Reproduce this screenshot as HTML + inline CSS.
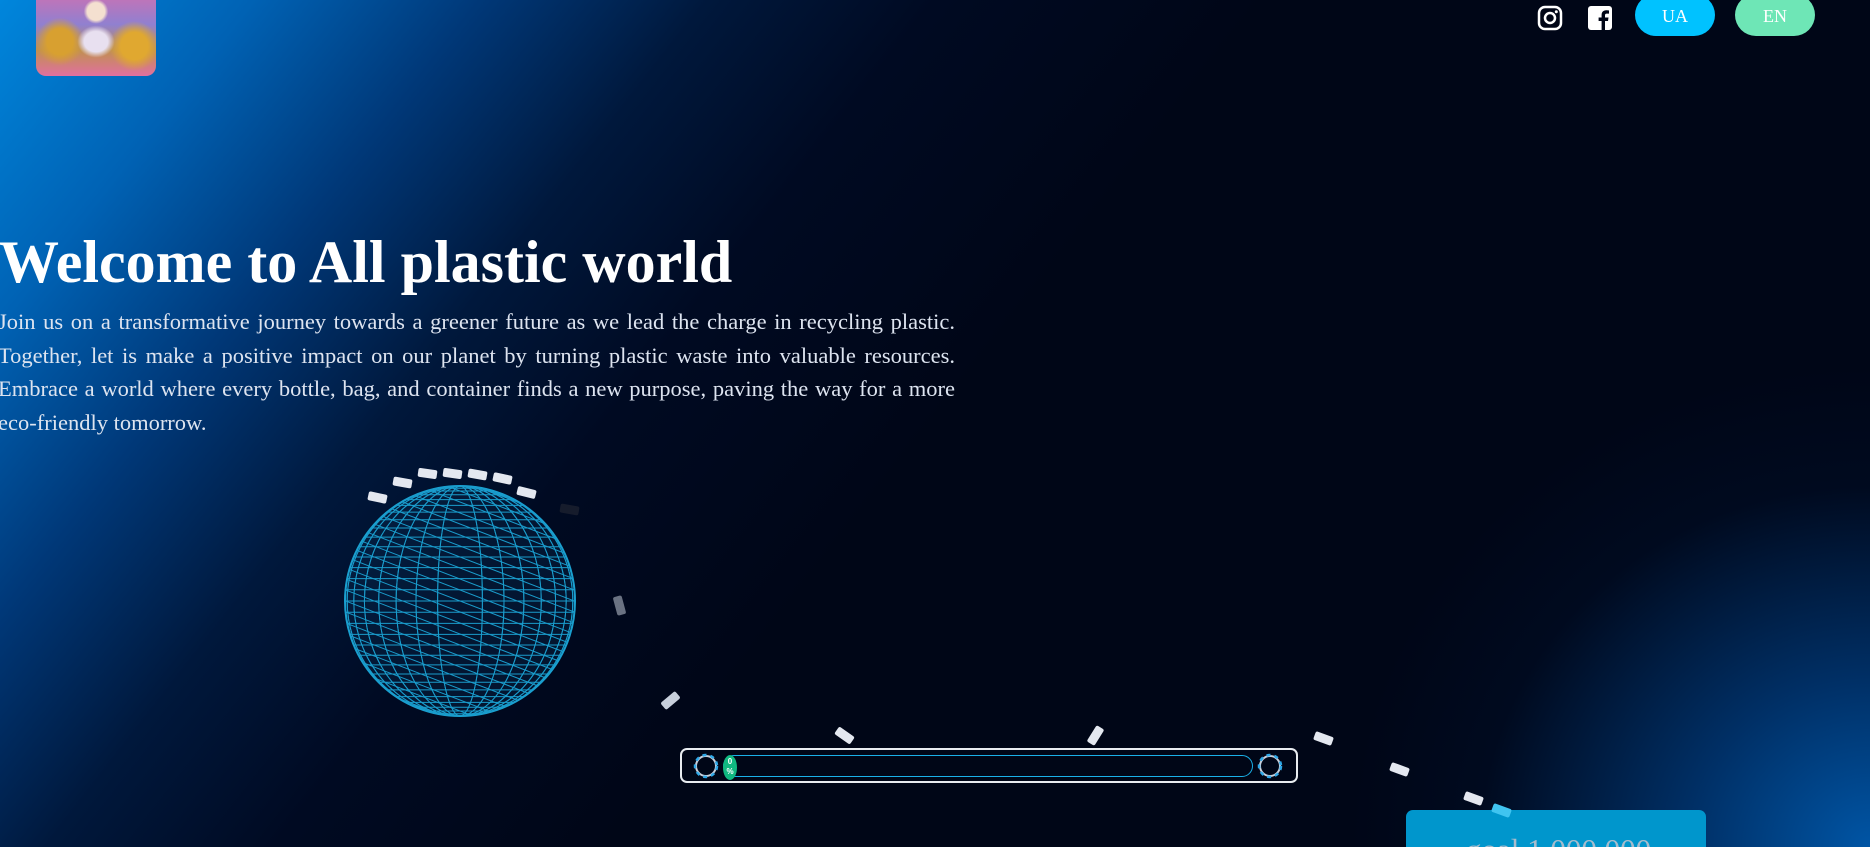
<!DOCTYPE html>
<html><head><meta charset="utf-8"><style>
html,body{margin:0;padding:0;width:1870px;height:847px;overflow:hidden;background:#000617;font-family:"Liberation Serif",serif}
#w{position:relative;width:1870px;height:847px;overflow:hidden}
.bg{position:absolute;left:0;top:0;width:1870px;height:847px;background:
radial-gradient(ellipse 520px 480px at 1870px 847px,rgba(0,85,165,1) 0%,rgba(0,65,135,.7) 35%,rgba(0,20,50,.3) 75%,rgba(0,6,23,0) 100%),
linear-gradient(128deg,#0086dc 0%,#0062b4 10%,#003878 19%,#00183c 28%,#000a22 37%,#000617 50%,#000617 100%);}
.logo{position:absolute;left:36px;top:-10px;width:120px;height:86px;border-radius:10px;background:
radial-gradient(circle at 50% 25%,#f4e0d0 0 10%,transparent 14%),
radial-gradient(ellipse at 50% 60%,#e8e0f0 0 14%,transparent 22%),
radial-gradient(circle at 20% 60%,#d8a030 0 12%,transparent 22%),
radial-gradient(circle at 82% 65%,#e0a830 0 12%,transparent 22%),
linear-gradient(180deg,#d070b0,#9080d0 40%,#c09050 70%,#e070a0);}
.ico{position:absolute;top:5px}
.btn{position:absolute;top:-6px;width:80px;height:42px;border-radius:21px;color:#fff;font-size:18px;text-align:center;line-height:44px}
h1{position:absolute;left:-1px;top:232px;margin:0;font-size:60px;line-height:60px;font-weight:bold;color:#fff;white-space:nowrap}
p{position:absolute;left:-2px;top:305px;width:957px;margin:0;font-size:22.5px;line-height:33.6px;color:#dde4f0;text-align:justify}
.d{position:absolute;width:19px;height:9px;border-radius:2px;background:#e4e8f0}
.goal{position:absolute;left:1406px;top:810px;width:300px;height:37px;overflow:hidden;border-radius:7px 7px 0 0;background:#0096cc;color:#a8bccc;font-size:31px;padding-left:60px;box-sizing:border-box;line-height:80px;white-space:nowrap}
</style></head><body><div id="w">
<div class="bg"></div>
<div class="logo"></div>
<svg class="ico" style="left:1537px" width="26" height="26" viewBox="0 0 26 26"><rect x="2" y="2" width="22" height="22" rx="6" fill="none" stroke="#fff" stroke-width="2.5"/><circle cx="13" cy="13" r="5" fill="none" stroke="#fff" stroke-width="2.5"/><circle cx="19.3" cy="6.7" r="1.5" fill="#fff"/></svg>
<svg class="ico" style="left:1588px" width="24" height="26" viewBox="0 0 24 26"><rect x="0" y="1" width="24" height="24" rx="3" fill="#fff"/><path d="M17 25V16h3l.5-3.5H17v-2.2c0-1 .4-1.7 1.8-1.7H21V5.5c-.5-.1-1.6-.2-2.8-.2-2.8 0-4.6 1.7-4.6 4.7v2.5h-3V16h3v9z" fill="#000617"/></svg>
<div class="btn" style="left:1635px;background:#00c2ff">UA</div>
<div class="btn" style="left:1735px;background:#6ee6b6">EN</div>
<h1>Welcome to All plastic world</h1>
<p>Join us on a transformative journey towards a greener future as we lead the charge in recycling plastic. Together, let is make a positive impact on our planet by turning plastic waste into valuable resources. Embrace a world where every bottle, bag, and container finds a new purpose, paving the way for a more eco-friendly tomorrow.</p>
<svg id="g" style="position:absolute;left:340px;top:481px" width="240" height="240" viewBox="-120 -120 240 240"></svg>
<div class="d" style="left:368px;top:493px;transform:rotate(12deg)"></div>
<div class="d" style="left:393px;top:478px;transform:rotate(10deg)"></div>
<div class="d" style="left:418px;top:469px;transform:rotate(8deg)"></div>
<div class="d" style="left:443px;top:469px;transform:rotate(8deg)"></div>
<div class="d" style="left:468px;top:470px;transform:rotate(10deg)"></div>
<div class="d" style="left:493px;top:474px;transform:rotate(12deg)"></div>
<div class="d" style="left:517px;top:488px;transform:rotate(14deg)"></div>
<div class="d" style="left:560px;top:505px;transform:rotate(10deg);background:#161c2c"></div>
<div class="d" style="left:610px;top:601px;transform:rotate(75deg);background:#6a7282"></div>
<div class="d" style="left:661px;top:696px;transform:rotate(-40deg);background:#c8d0dc"></div>
<div class="d" style="left:835px;top:731px;transform:rotate(35deg)"></div>
<div class="d" style="left:1086px;top:731px;transform:rotate(-58deg)"></div>
<div class="d" style="left:1314px;top:734px;transform:rotate(20deg)"></div>
<div class="d" style="left:1390px;top:765px;transform:rotate(20deg)"></div>
<div class="d" style="left:1464px;top:794px;transform:rotate(20deg)"></div>
<div class="goal">goal 1 000 000</div>
<div class="d" style="left:1492px;top:806px;transform:rotate(20deg);background:#40c4f0"></div>
<div style="position:absolute;left:680px;top:748px;width:614px;height:31px;border:2px solid #e8ecf0;border-radius:7px"></div>
<div style="position:absolute;left:723px;top:755px;width:528px;height:20px;border:1.5px solid #1ab0e8;border-radius:11px"></div>
<div style="position:absolute;left:723px;top:755px;width:14px;height:25px;border-radius:50%;background:#10b880;color:#fff;font:bold 8px 'Liberation Sans',sans-serif;text-align:center;line-height:10px;padding-top:2px;box-sizing:border-box">0<br>%</div>
<svg style="position:absolute;left:693px;top:753px" width="26" height="26"><circle cx="13" cy="13" r="10" fill="none" stroke="#c8d0dc" stroke-width="2"/><circle cx="13" cy="13" r="11" fill="none" stroke="#2ea8e8" stroke-width="2.5" stroke-dasharray="4 4"/></svg>
<svg style="position:absolute;left:1257px;top:753px" width="26" height="26"><circle cx="13" cy="13" r="10" fill="none" stroke="#c8d0dc" stroke-width="2"/><circle cx="13" cy="13" r="11" fill="none" stroke="#2ea8e8" stroke-width="2.5" stroke-dasharray="4 4"/></svg>
</div>
<script>
var s=document.getElementById('g'),R=115,h='<defs><clipPath id="c"><circle r="115"/></clipPath></defs><circle r="115" fill="rgba(10,60,100,.25)" stroke="#1aa0d0" stroke-width="2"/><g clip-path="url(#c)" stroke="#1a9ccc" stroke-width="1" fill="none">';
for(var i=1;i<16;i++){var a=i*Math.PI/16;h+='<ellipse rx="'+(R*Math.abs(Math.cos(a))).toFixed(1)+'" ry="115"/>';}
for(var i=-15;i<=15;i++){var y=R*Math.sin(i*Math.PI/32);h+='<line x1="-120" x2="120" y1="'+y.toFixed(1)+'" y2="'+y.toFixed(1)+'"/>';}
for(var i=-22;i<=22;i++){var y=i*11;h+='<line x1="-130" x2="130" y1="'+(y-50)+'" y2="'+(y+50)+'"/>';}
h+='</g>';s.innerHTML=h;
</script>
</body></html>
